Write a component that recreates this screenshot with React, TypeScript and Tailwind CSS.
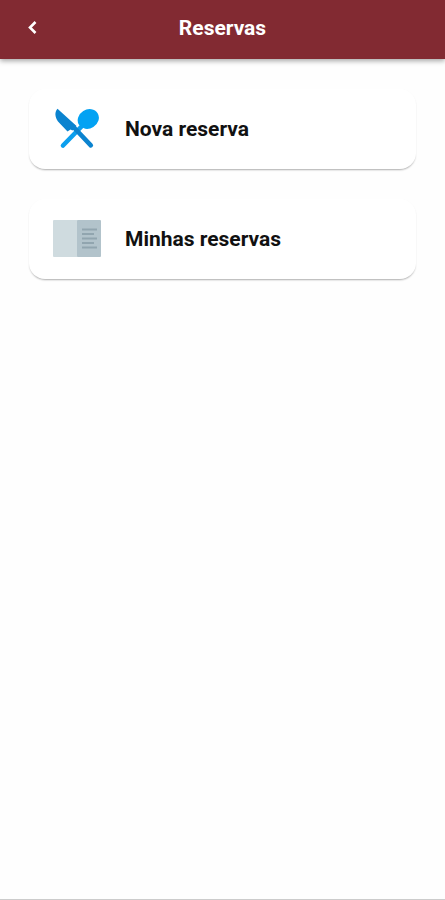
import React from "react";

type MenuItem = {
  id: string;
  label: string;
  icon: React.ReactNode;
};

const CutleryIcon = () => (
  <svg viewBox="0 0 48 48" className="w-12 h-12 shrink-0" aria-hidden="true">
    {/* Spoon */}
    <path d="M10 40.500 29 21" stroke="#0c9fee" strokeWidth="4.600" strokeLinecap="round" />
    <ellipse cx="35.3" cy="14" rx="11" ry="9.500" transform="rotate(-32 35.3 14)" fill="#03a2f3" />
    {/* Knife */}
    <path d="M4.500 3.800C1.500 7 1.800 12 5 16.500L14.500 26.500L17.500 24.500L19.500 25.500L23.500 21Z" fill="#0b83cf" />
    <path d="M20 21.500 37.800 40.300" stroke="#0b83cf" strokeWidth="4.600" strokeLinecap="round" />
  </svg>
);

const MenuBookIcon = () => (
  <svg viewBox="0 0 48 48" className="w-12 h-12 shrink-0" aria-hidden="true">
    <rect x="0" y="5" width="25" height="37" rx="1" fill="#cfdbdf" />
    <rect x="24" y="5" width="24" height="37" rx="1" fill="#b2c3cb" />
    <path
      d="M29 14.500h15M29 19h12M29 23.500h15M29 28h12M29 32.500h15"
      stroke="#91a5af"
      strokeWidth="2.200"
    />
  </svg>
);

const items: MenuItem[] = [
  { id: "nova", label: "Nova reserva", icon: <CutleryIcon /> },
  { id: "minhas", label: "Minhas reservas", icon: <MenuBookIcon /> },
];

const App: React.FC = () => {
  return (
    <div className="min-h-screen flex flex-col bg-[#fefefe] border-b border-[#cccccc] font-[Roboto,sans-serif]">
      <header className="grid grid-cols-[64px_1fr_64px] items-center h-[59px] pb-1 bg-[#822a32] text-white shadow-[0_2px_5px_rgba(0,0,0,0.35)]">
        <button type="button" aria-label="Voltar" className="flex items-center justify-center h-12">
          <svg viewBox="0 0 24 24" className="w-6 h-6" fill="none" aria-hidden="true">
            <path d="M15.500 6 10 11.500 15.500 17" stroke="currentColor" strokeWidth="2.600" />
          </svg>
        </button>
        <h1 className="text-center text-[21px] leading-6 font-bold">Reservas</h1>
      </header>

      <main className="flex flex-col gap-[30px] px-[29px] pt-[30px]">
        {items.map((item) => (
          <button
            key={item.id}
            type="button"
            className="flex items-center gap-6 w-full h-20 px-6 rounded-2xl bg-white text-left shadow-[0_2px_2px_-1px_rgba(0,0,0,0.28),0_1px_2px_rgba(0,0,0,0.06)]"
          >
            {item.icon}
            <span className="text-[21px] leading-6 font-bold text-[#111111]">{item.label}</span>
          </button>
        ))}
      </main>
    </div>
  );
};

export default App;
